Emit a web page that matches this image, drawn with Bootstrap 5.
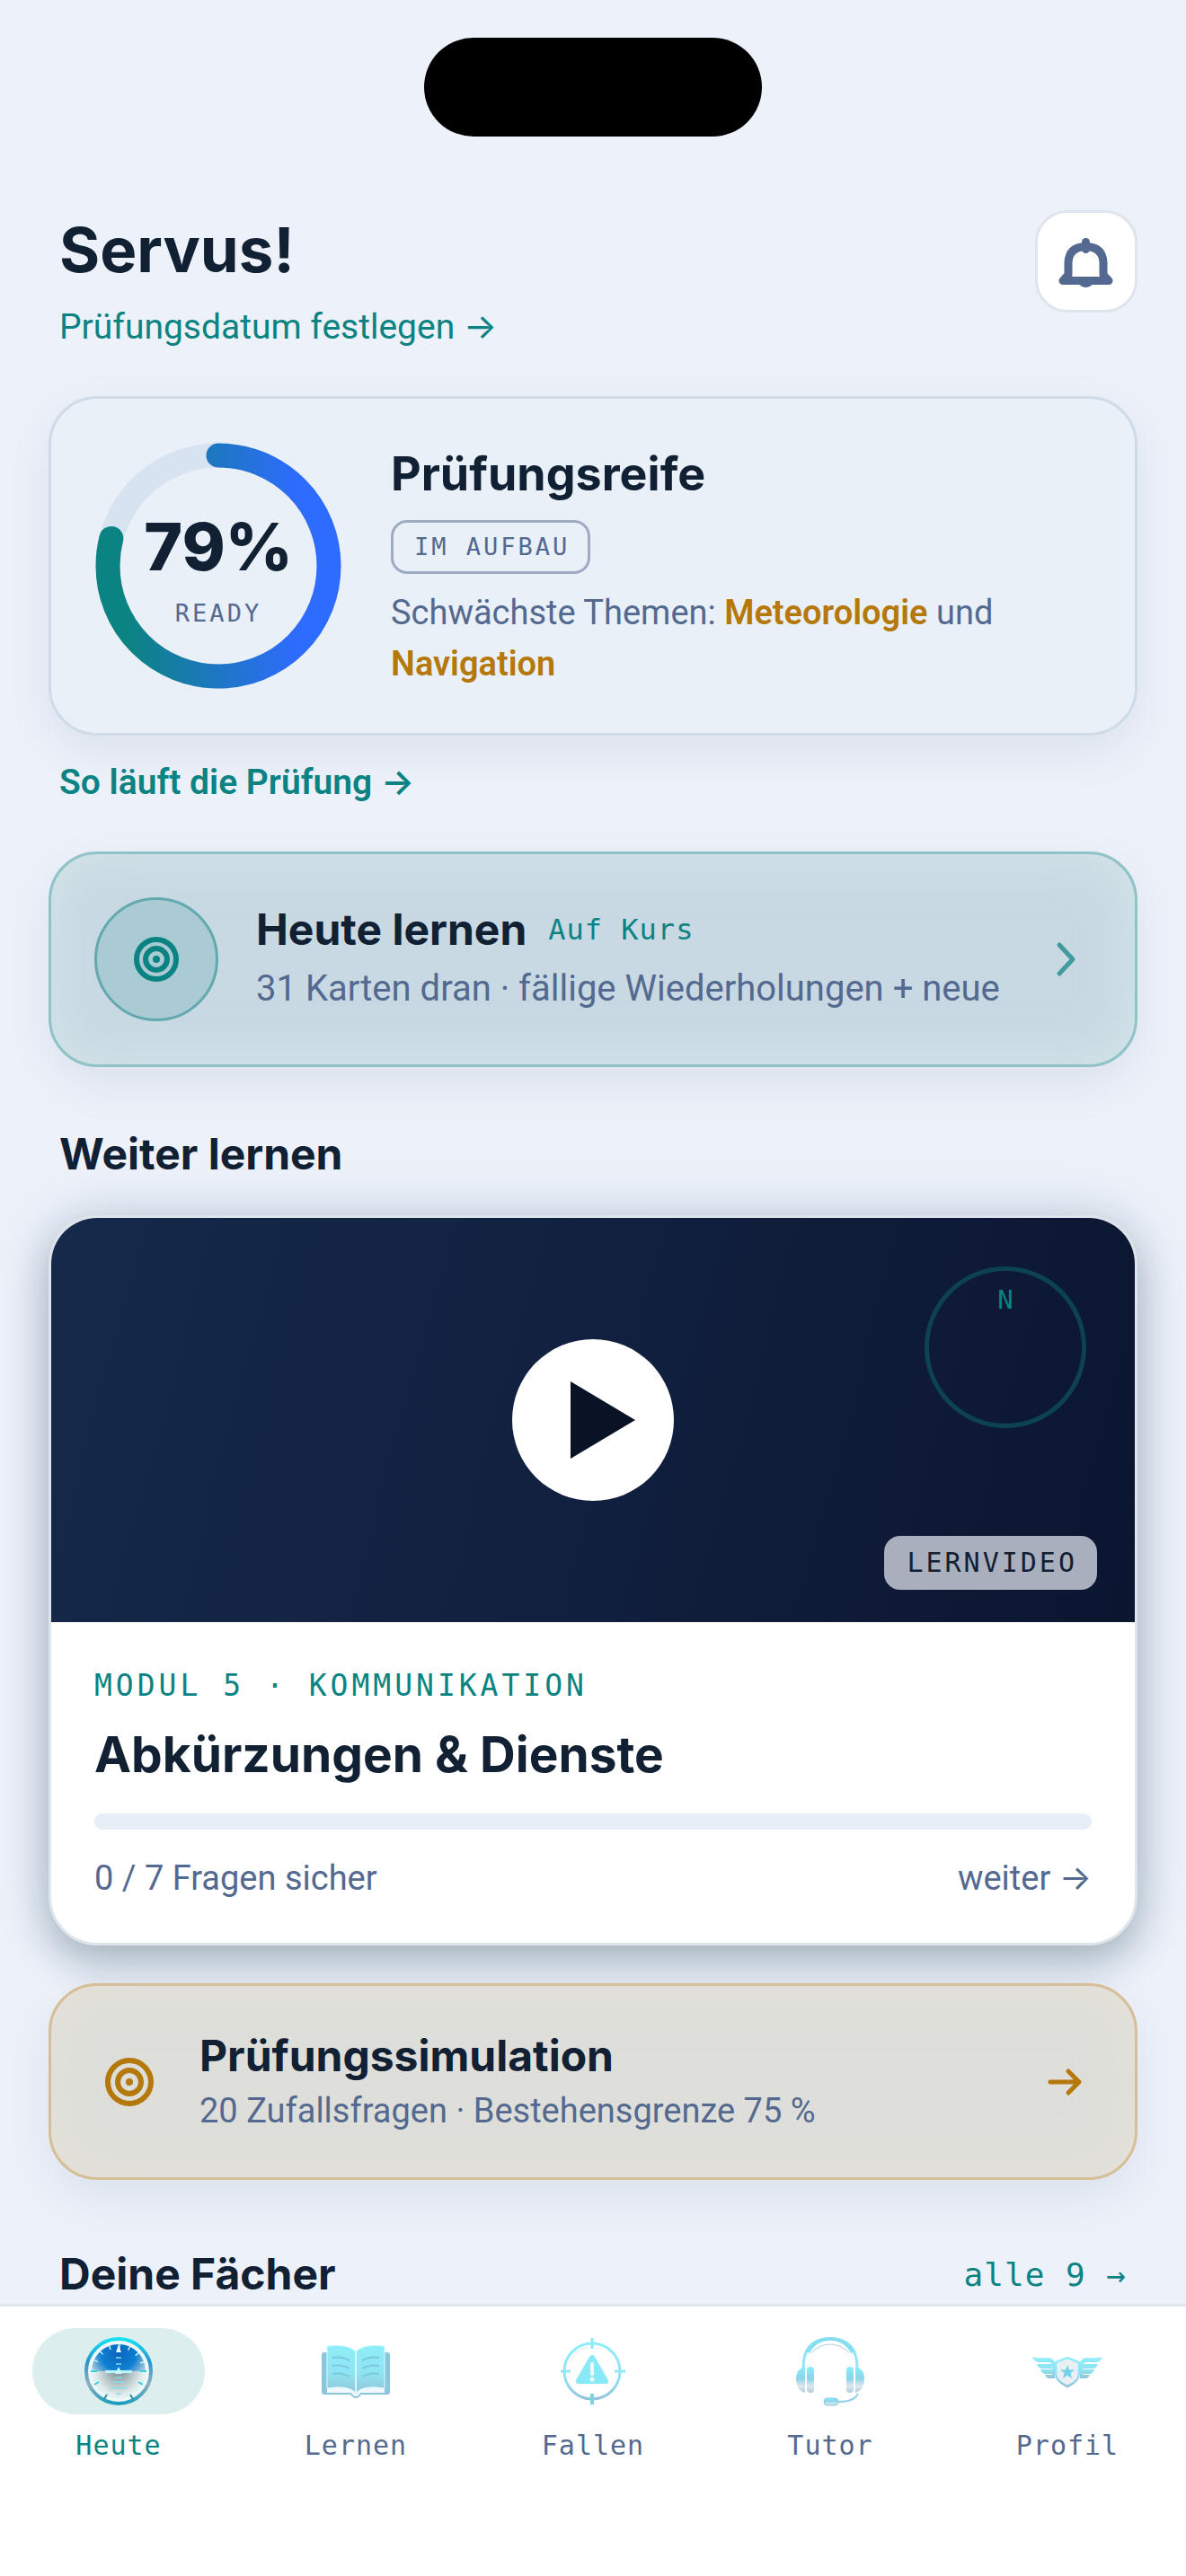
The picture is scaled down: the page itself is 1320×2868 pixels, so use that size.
<!DOCTYPE html>
<html lang="de">
<head>
<meta charset="utf-8">
<meta name="viewport" content="width=device-width, initial-scale=1">
<title>Heute</title>
<link href="https://cdn.jsdelivr.net/npm/bootstrap@5.3.0/dist/css/bootstrap.min.css" rel="stylesheet">
<script src="https://cdn.jsdelivr.net/npm/bootstrap@5.3.0/dist/js/bootstrap.bundle.min.js"></script>
<style>
:root{--ink:#112033;--muted:#546990;--teal:#0c8383;--amber:#b5780a;--page:#ecf1fa}
body{background:var(--page);color:var(--muted);font:400 38px/57px Roboto,Inter,sans-serif}
a{color:inherit;text-decoration:none}
.island{width:376px;height:110px;border-radius:55px;background:#000}
.statusbar{padding:42px 0 82px}
.screen{padding:0 54px 304px}
.inset{padding-left:12px;padding-right:12px}
.headline{font-family:Inter,sans-serif;font-weight:700;color:var(--ink);margin:0}
.h-hero{font-size:69px;line-height:88px;margin-bottom:14px}
.h-lg{font-size:52px;line-height:72px}
.h-xl{font-size:55px;line-height:72px}
.h-md{font-size:48px;line-height:66px}
.mono{font-family:"DejaVu Sans Mono",monospace}
.tag{font-size:27px;line-height:36px;letter-spacing:3px}
.teal{color:var(--teal)}
.amber{color:var(--amber)}
.topbar{margin-bottom:48px}
.textlink{font-size:39px}
.bell{width:114px;height:114px;border:3px solid #e0e5ed;border-radius:36px;background:#fff;padding:0}
.tile{border:3px solid #cfdbe7;border-radius:54px;box-shadow:0 18px 54px rgba(17,32,51,.07)}
.ready{background:#e9f0f8;padding:48px;gap:54px}
.level{border:3px solid #9fabc2;border-radius:18px;padding:9px 20px 9px 23px;margin:15px 0;border-collapse:separate}
.dial{width:276px;height:276px}
.dial-text{top:0;left:0;padding-top:9px}
.dial-text .tag{line-height:52px}
.score{font:800 73px/96px Inter,sans-serif;color:var(--ink)}
.exam-info{margin:24px 0 48px}
.today{background:#c8d9e3;border-color:#8fc3c8;padding:48px;gap:42px;box-shadow:0 18px 54px rgba(17,32,51,.07),inset 0 0 60px rgba(225,243,238,.5)}
.disc{width:138px;height:138px;border:3px solid #62a9af;background:#abcbd4}
.pace{font-size:32px;letter-spacing:1px}
.due{font-size:40px;line-height:66px}
.section-next{margin:64px 0 35px}
.lesson{border-color:#dde4eb;background:#fff;box-shadow:0 18px 42px rgba(14,50,62,.26),0 0 66px rgba(14,50,62,.14);overflow:hidden}
.video{height:450px;background:linear-gradient(105deg,#15294a,#11203f 50%,#0b1530)}
.play{width:180px;height:180px;border:0;background:#fff;padding:0}
.compass{width:180px;height:180px;border:5px solid #0d4252;top:54px;right:54px;padding-top:11px;line-height:42px;font-size:29px}
.chip{right:42px;bottom:36px;font-size:30px;line-height:60px;letter-spacing:3px;padding:0 22px 0 25px;border-radius:18px;background:#a9afbd;color:var(--ink)}
.lesson-body{padding:48px}
.module{font-size:33px;line-height:45px;letter-spacing:4px;margin-bottom:18px}
.meter{height:18px;border-radius:9px;background:#e7eef8;margin:30px 0}
.sub{font-size:38px;line-height:48px}
.exam{background:#dedfda;border-color:#d6bf96;padding:48px;gap:39px;margin-top:42px;box-shadow:0 18px 54px rgba(17,32,51,.07),inset 0 0 60px rgba(240,230,214,.5)}
.exam .h-md{line-height:60px;margin-bottom:6px}
.exam .sub{line-height:51px}
.section-subjects{margin-top:72px}
.all-link{font-size:36px;letter-spacing:1px}
.tabs{background:#fff;border-top:3px solid #e0e5ee;padding:24px 0 124px;font-size:30px;letter-spacing:1px}
.tabs a{line-height:42px;gap:14px}
.pill{width:192px;height:96px;border-radius:48px}
.on .pill{background:#dceeee}
</style>
</head>
<body>
<div class="statusbar"><div class="island mx-auto"></div></div>
<main class="screen">
  <header class="topbar d-flex justify-content-between align-items-start">
    <div class="inset">
      <h1 class="headline h-hero">Servus!</h1>
      <a href="#" class="textlink teal d-block">Prüfungsdatum festlegen →</a>
    </div>
    <button class="bell d-flex align-items-center justify-content-center" aria-label="Mitteilungen">
      <svg width="66" height="66" viewBox="0 0 66 66" fill="none" stroke="#546990" stroke-width="9" stroke-linecap="round" stroke-linejoin="round"><path d="M13 48V34Q14 17 32.500 16.500 51 17 52 34V48L58 54.500H7Z"/><path d="M32.500 11.500v8"/><path d="M25 57q7.500 8 15 0Z" fill="#546990" stroke-width="2"/></svg>
    </button>
  </header>

  <section class="tile ready d-flex align-items-center">
    <div class="dial position-relative flex-shrink-0">
      <svg class="d-block" width="276" height="276" viewBox="0 0 276 276" fill="none" stroke-width="27">
        <defs><linearGradient id="arc" gradientUnits="userSpaceOnUse" x1="0" y1="15" x2="0" y2="261"><stop offset=".1" stop-color="#0c8383"/><stop offset=".86" stop-color="#2e6bff"/></linearGradient></defs>
        <circle cx="138" cy="138" r="123" stroke="#d8e3f1"/>
        <circle cx="138" cy="138" r="123" stroke="url(#arc)" stroke-linecap="round" pathLength="100" stroke-dasharray="79 100" transform="rotate(-90 138 138)"/>
      </svg>
      <div class="dial-text position-absolute w-100 h-100 d-flex flex-column align-items-center justify-content-center">
        <span class="score">79%</span><span class="mono tag">READY</span>
      </div>
    </div>
    <div>
      <h2 class="headline h-lg">Prüfungsreife</h2>
      <span class="mono tag level d-table">IM AUFBAU</span>
      <div>Schwächste Themen: <b class="amber fw-semibold">Meteorologie</b> und <b class="amber fw-semibold">Navigation</b></div>
    </div>
  </section>

  <a href="#" class="exam-info textlink inset teal fw-semibold d-block">So läuft die Prüfung →</a>

  <a href="#" class="tile today d-flex align-items-center">
    <span class="disc rounded-circle d-flex align-items-center justify-content-center flex-shrink-0">
      <svg width="54" height="54" viewBox="0 0 54 54" fill="none" stroke="#0c8383" stroke-width="6"><circle cx="27" cy="27" r="22"/><circle cx="27" cy="27" r="12"/><circle cx="27" cy="27" r="4" fill="#0c8383" stroke="none"/></svg>
    </span>
    <span class="flex-grow-1">
      <span class="d-flex align-items-center gap-4"><span class="headline h-md">Heute lernen</span><span class="mono teal pace">Auf Kurs</span></span>
      <span class="due d-block">31 Karten dran · fällige Wiederholungen + neue</span>
    </span>
    <svg class="flex-shrink-0" width="60" height="60" viewBox="0 0 60 60" fill="none" stroke="#429a9d" stroke-width="5" stroke-linecap="round" stroke-linejoin="round"><path d="M24 14l15 16-15 16"/></svg>
  </a>

  <h2 class="section-next headline h-md inset">Weiter lernen</h2>

  <article class="tile lesson">
    <div class="video position-relative d-flex align-items-center justify-content-center">
      <button class="play rounded-circle" aria-label="Abspielen"><svg class="d-block" width="180" height="180" viewBox="0 0 180 180"><path d="M65 47L137 90 65 133Z" fill="#0a1325"/></svg></button>
      <div class="compass mono teal rounded-circle position-absolute text-center">N</div>
      <span class="chip mono position-absolute">LERNVIDEO</span>
    </div>
    <div class="lesson-body">
      <div class="module mono teal">MODUL 5 · KOMMUNIKATION</div>
      <h3 class="headline h-xl">Abkürzungen &amp; Dienste</h3>
      <div class="meter" role="progressbar" aria-label="Fortschritt" aria-valuenow="0" aria-valuemin="0" aria-valuemax="7"></div>
      <div class="sub d-flex justify-content-between"><span>0 / 7 Fragen sicher</span><a href="#">weiter →</a></div>
    </div>
  </article>

  <a href="#" class="tile exam d-flex align-items-center">
    <svg class="flex-shrink-0" width="78" height="78" viewBox="0 0 78 78" fill="none" stroke="#b5780a" stroke-width="6"><circle cx="39" cy="39" r="24"/><circle cx="39" cy="39" r="13"/><circle cx="39" cy="39" r="4" fill="#b5780a" stroke="none"/></svg>
    <span class="flex-grow-1"><span class="headline h-md d-block">Prüfungssimulation</span><span class="sub d-block">20 Zufallsfragen · Bestehensgrenze 75 %</span></span>
    <svg class="flex-shrink-0" width="60" height="60" viewBox="0 0 60 60" fill="none" stroke="#b5780a" stroke-width="5" stroke-linecap="round" stroke-linejoin="round"><path d="M14 30H46M34 18l12 12-12 12"/></svg>
  </a>

  <div class="section-subjects inset d-flex justify-content-between align-items-center">
    <h2 class="headline h-md">Deine Fächer</h2><a href="#" class="all-link mono teal">alle 9 →</a>
  </div>
</main>

<nav class="tabs fixed-bottom mono">
  <svg width="0" height="0" class="position-absolute"><defs>
    <linearGradient id="ice" x1="0" y1="0" x2="0" y2="1"><stop offset="0" stop-color="#8feef9"/><stop offset=".6" stop-color="#8fe3f2"/><stop offset="1" stop-color="#92c4da"/></linearGradient>
    <linearGradient id="rim" x1="0" y1="0" x2="0" y2="1"><stop offset="0" stop-color="#12e3f3"/><stop offset=".35" stop-color="#2a93cb"/><stop offset=".7" stop-color="#8fb0bd"/><stop offset="1" stop-color="#1f9dbd"/></linearGradient>
    <radialGradient id="sky" gradientUnits="userSpaceOnUse" cx="39" cy="18" r="36"><stop offset="0" stop-color="#0a63bd"/><stop offset=".55" stop-color="#0f7fd2"/><stop offset="1" stop-color="#b9d3da"/></radialGradient>
    <radialGradient id="ground" gradientUnits="userSpaceOnUse" cx="39" cy="39" r="27"><stop offset="0" stop-color="#7b8d93"/><stop offset="1" stop-color="#e6efef"/></radialGradient>
    <linearGradient id="pad" x1="0" y1="0" x2="0" y2="1"><stop offset="0" stop-color="#8beefa"/><stop offset=".45" stop-color="#8ad4e9"/><stop offset=".75" stop-color="#dfe7ec"/><stop offset="1" stop-color="#a6cddd"/></linearGradient>
  </defs></svg>
  <div class="row row-cols-5 g-0">
    <a href="#" class="col on teal d-flex flex-column align-items-center" aria-current="page">
      <span class="pill d-flex align-items-center justify-content-center">
        <svg width="78" height="78" viewBox="0 0 78 78" fill="none"><circle cx="39" cy="39" r="36" stroke="url(#rim)" stroke-width="4" fill="#edf7f7"/><path d="M8 39a31 31 0 0 1 62 0Z" fill="url(#sky)"/><path d="M8 39a31 31 0 0 0 62 0Z" fill="url(#ground)"/><circle cx="39" cy="39" r="31.500" stroke="#eef8f9" stroke-width="3"/><circle cx="39" cy="39" r="28" stroke="#c9f3f8" stroke-width="5" stroke-dasharray="1.500 9.500"/><path d="M8 39h7M63 39h7M12 54l5-3M66 54l-5-3" stroke="#35cfe0" stroke-width="2"/><path d="M26 65l-3 5M52 65l3 5" stroke="#2b8ea0" stroke-width="2"/><path d="M39 9l3 9h-6Z" fill="#e6fbff"/><path d="M36 24h6M36 31h6M35 46h8M33 51h12M30 58h18M36 64h6" stroke="#83dfe9" stroke-width="1.500"/><path d="M24 39.500h30" stroke="#b9f3f7" stroke-width="3"/><path d="M39 34l4 8h-8Z" fill="#c7fafd"/></svg>
      </span>Heute
    </a>
    <a href="#" class="col d-flex flex-column align-items-center">
      <span class="pill d-flex align-items-center justify-content-center">
        <svg width="78" height="78" viewBox="0 0 78 78" fill="none"><path d="M4 18h6v45h58V18h6a3 3 0 0 1 3 3v41a3 3 0 0 1-3 3H45q-3 4-6 4t-6-4H4a3 3 0 0 1-3-3V21a3 3 0 0 1 3-3Z" fill="#8cc6dd"/><path d="M7 57q21-3 32 6 11-9 32-6v6H44q-2 4-5 4t-5-4H7Z" fill="#f1f7fa"/><path d="M39 17Q30 8 7 11V58q23-4 32 5 9-9 32-5V11Q48 8 39 17Z" fill="url(#ice)" stroke="#d9fbff" stroke-width="1"/><path d="M39 17V64" stroke="#d8f5fb" stroke-width="2"/><path d="M13 24q10-2 19 3M13 33q10-2 19 3M13 42q10-2 19 3M65 24q-10-2-19 3M65 33q-10-2-19 3M65 42q-10-2-19 3" stroke="#7cc8dc" stroke-width="2"/></svg>
      </span>Lernen
    </a>
    <a href="#" class="col d-flex flex-column align-items-center">
      <span class="pill d-flex align-items-center justify-content-center">
        <svg width="78" height="78" viewBox="0 0 78 78" fill="none"><circle cx="38" cy="39" r="31" stroke="url(#ice)" stroke-width="3"/><path d="M13 30a27 27 0 0 1 21-18" stroke="#e6e9ec" stroke-width="1"/><path d="M38 2v12M3 39h11M63 39h12" stroke="#8fe9f6" stroke-width="3"/><path d="M38 64v12" stroke="#82cfe2" stroke-width="4"/><path d="M35 23q3-5 6 0l15 26q1 4-3 4H23q-4 0-3-4Z" fill="#88e9f7"/><path d="M38 31v11" stroke="#eefcff" stroke-width="4" stroke-linecap="round"/><circle cx="38" cy="48" r="2.500" fill="#eefcff"/></svg>
      </span>Fallen
    </a>
    <a href="#" class="col d-flex flex-column align-items-center">
      <span class="pill d-flex align-items-center justify-content-center">
        <svg width="78" height="78" viewBox="0 0 78 78" fill="none"><path d="M9 35Q9 3 39 3t30 32" stroke="#92e6f5" stroke-width="3"/><path d="M14 18Q22 3 39 3t25 15" stroke="#86dff0" stroke-width="4"/><path d="M18 18Q28 9 39 9t21 9" stroke="#a9cfe0" stroke-width="1"/><path d="M11 34v29Q1 60 1 48t10-14ZM67 34v29q10-3 10-15T67 34Z" fill="url(#pad)"/><rect x="13" y="34" width="8" height="29" rx="4" fill="url(#pad)"/><rect x="57" y="34" width="8" height="29" rx="4" fill="url(#pad)"/><path d="M70 64q-4 9-22 9" stroke="#93d3e5" stroke-width="2"/><rect x="32" y="69" width="16" height="8" rx="4" fill="url(#pad)" stroke="#7fcfe2"/></svg>
      </span>Tutor
    </a>
    <a href="#" class="col d-flex flex-column align-items-center">
      <span class="pill d-flex align-items-center justify-content-center">
        <svg width="78" height="78" viewBox="0 0 78 78" fill="none"><path d="M0 23Q5 25 18 24q7 1 7 7v16H18q-3-1-4-4h8v-1H14q-4-1-5-5h13v-1H10q-4-1-5-5h17q-2-2-5-2H6Q2 28 0 23Z" fill="url(#ice)"/><path d="M78 23Q73 25 60 24q-7 1-7 7v16h7q3-1 4-4h-8v-1h8q4-1 5-5H56v-1h12q4-1 5-5H56q2-2 5-2H72q4-1 6-6Z" fill="url(#ice)"/><path d="M39 24l13 5v13q0 8-13 14-13-6-13-14V29Z" fill="#e9eff3" stroke="url(#ice)" stroke-width="2.500"/><path d="M39 32l2 5.500h6l-4.500 3.500 1.500 6-5-3.500-5 3.500 1.500-6-4.500-3.500h6Z" fill="#72d3e8"/></svg>
      </span>Profil
    </a>
  </div>
</nav>
</body>
</html>
